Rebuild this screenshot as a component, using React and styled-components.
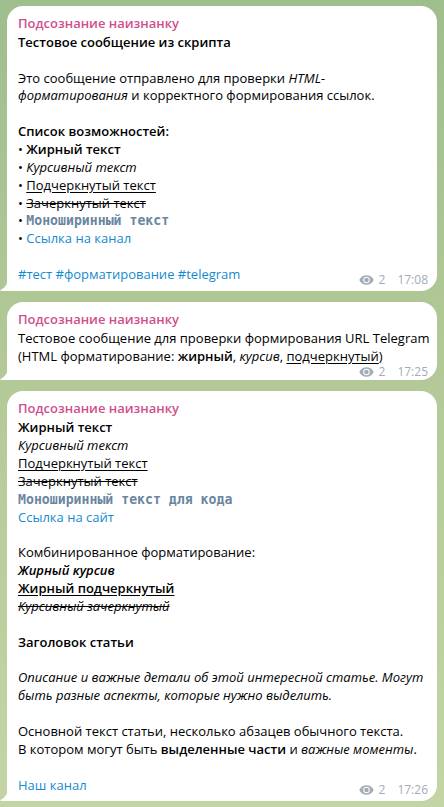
import styled, { createGlobalStyle } from "styled-components";

const GlobalStyle = createGlobalStyle`
  html, body {
    margin: 0;
    padding: 0;
  }
  body {
    font-family: "Open Sans", "Noto Sans", sans-serif;
    font-size: 13px;
    color: #000;
  }
`;

const Chat = styled.div`
  min-height: 807px;
  box-sizing: border-box;
  padding: 6px 7px 0 7px;
  display: flex;
  flex-direction: column;
  gap: 11px;
  background: linear-gradient(180deg, #9fbe8d 0%, #b2c997 45%, #c3d5a4 100%);
`;

const Bubble = styled.div`
  position: relative;
  background: #fff;
  border-radius: 16px 16px 16px 0;
  padding: 9px 9px 7px 11px;
  line-height: 17.86px;
`;

const Tail = styled.svg`
  position: absolute;
  left: -7px;
  bottom: 0;
  width: 8px;
  height: 13px;
`;

const Name = styled.div`
  color: #cf4f8c;
  font-weight: 600;
  margin-bottom: 1px;
`;

const Line = styled.div`
  white-space: nowrap;
`;

const Gap = styled.div`
  height: 17.86px;
`;

const Bold = styled.b`
  font-weight: 600;
`;

const Ital = styled.i``;

const Under = styled.span`
  text-decoration: underline;
  text-underline-offset: 2px;
`;

const Strike = styled.span`
  text-decoration: line-through;
`;

const Mono = styled.span`
  font-family: "DejaVu Sans Mono", "Liberation Mono", monospace;
  font-size: 13.2px;
  font-weight: bold;
  color: #6a86a0;
`;

const Link = styled.a`
  color: #168acd;
  text-decoration: none;
`;

const Footer = styled.div`
  display: flex;
  align-items: flex-end;
  justify-content: ${(p) => (p.$only ? "flex-end" : "space-between")};
`;

const Meta = styled.div`
  display: flex;
  align-items: center;
  font-size: 12px;
  line-height: 14px;
  color: #a1acb6;
  margin-bottom: ${(p) => (p.$only ? "-6px" : "-3px")};
`;

const Views = styled.span`
  margin-left: 5px;
`;

const Time = styled.span`
  margin-left: 12px;
`;

const TailShape = () => (
  <Tail viewBox="0 0 8 13">
    <path d="M8 0 C8 5 5.5 9.5 1 11.8 C0.2 12.2 0.3 13 1 13 L8 13 Z" fill="#fff" />
  </Tail>
);

const Eye = () => (
  <svg width="15" height="10" viewBox="0 0 15 10">
    <path
      d="M7.5 0.2C4.3 0.2 1.6 2.2 0.3 5c1.3 2.8 4 4.8 7.2 4.8s5.9-2 7.2-4.8C13.4 2.2 10.7 0.2 7.5 0.2z"
      fill="#a1acb6"
    />
    <circle cx="7.5" cy="5" r="3.3" fill="#fff" />
    <circle cx="7.5" cy="5" r="2.3" fill="#a1acb6" />
  </svg>
);

const MetaInfo = ({ time, only }) => (
  <Meta $only={only}>
    <Eye />
    <Views>2</Views>
    <Time>{time}</Time>
  </Meta>
);

export default function App() {
  return (
    <>
      <GlobalStyle />
      <Chat>
        <Bubble>
          <Name>Подсознание наизнанку</Name>
          <Line>
            <Bold>Тестовое сообщение из скрипта</Bold>
          </Line>
          <Gap />
          <Line>
            Это сообщение отправлено для проверки <Ital>HTML-</Ital>
          </Line>
          <Line>
            <Ital>форматирования</Ital> и корректного формирования ссылок.
          </Line>
          <Gap />
          <Line>
            <Bold>Список возможностей:</Bold>
          </Line>
          <Line>
            • <Bold>Жирный текст</Bold>
          </Line>
          <Line>
            • <Ital>Курсивный текст</Ital>
          </Line>
          <Line>
            • <Under>Подчеркнутый текст</Under>
          </Line>
          <Line>
            • <Strike>Зачеркнутый текст</Strike>
          </Line>
          <Line>
            • <Mono>Моноширинный текст</Mono>
          </Line>
          <Line>
            • <Link>Ссылка на канал</Link>
          </Line>
          <Gap />
          <Footer>
            <Line>
              <Link>#тест</Link> <Link>#форматирование</Link>{" "}
              <Link>#telegram</Link>
            </Line>
            <MetaInfo time="17:08" />
          </Footer>
          <TailShape />
        </Bubble>

        <Bubble>
          <Name>Подсознание наизнанку</Name>
          <Line>Тестовое сообщение для проверки формирования URL Telegram</Line>
          <Line>
            (HTML форматирование: <Bold>жирный</Bold>, <Ital>курсив</Ital>,{" "}
            <Under>подчеркнутый</Under>)
          </Line>
          <Footer $only>
            <MetaInfo time="17:25" only />
          </Footer>
          <TailShape />
        </Bubble>

        <Bubble>
          <Name>Подсознание наизнанку</Name>
          <Line>
            <Bold>Жирный текст</Bold>
          </Line>
          <Line>
            <Ital>Курсивный текст</Ital>
          </Line>
          <Line>
            <Under>Подчеркнутый текст</Under>
          </Line>
          <Line>
            <Strike>Зачеркнутый текст</Strike>
          </Line>
          <Line>
            <Mono>Моноширинный текст для кода</Mono>
          </Line>
          <Line>
            <Link>Ссылка на сайт</Link>
          </Line>
          <Gap />
          <Line>Комбинированное форматирование:</Line>
          <Line>
            <Bold>
              <Ital>Жирный курсив</Ital>
            </Bold>
          </Line>
          <Line>
            <Bold>
              <Under>Жирный подчеркнутый</Under>
            </Bold>
          </Line>
          <Line>
            <Ital>
              <Strike>Курсивный зачеркнутый</Strike>
            </Ital>
          </Line>
          <Gap />
          <Line>
            <Bold>Заголовок статьи</Bold>
          </Line>
          <Gap />
          <Line>
            <Ital>
              Описание и важные детали об этой интересной статье. Могут
            </Ital>
          </Line>
          <Line>
            <Ital>быть разные аспекты, которые нужно выделить.</Ital>
          </Line>
          <Gap />
          <Line>Основной текст статьи, несколько абзацев обычного текста.</Line>
          <Line>
            В котором могут быть <Bold>выделенные части</Bold> и{" "}
            <Ital>важные моменты</Ital>.
          </Line>
          <Gap />
          <Footer>
            <Line>
              <Link>Наш канал</Link>
            </Line>
            <MetaInfo time="17:26" />
          </Footer>
          <TailShape />
        </Bubble>
      </Chat>
    </>
  );
}
